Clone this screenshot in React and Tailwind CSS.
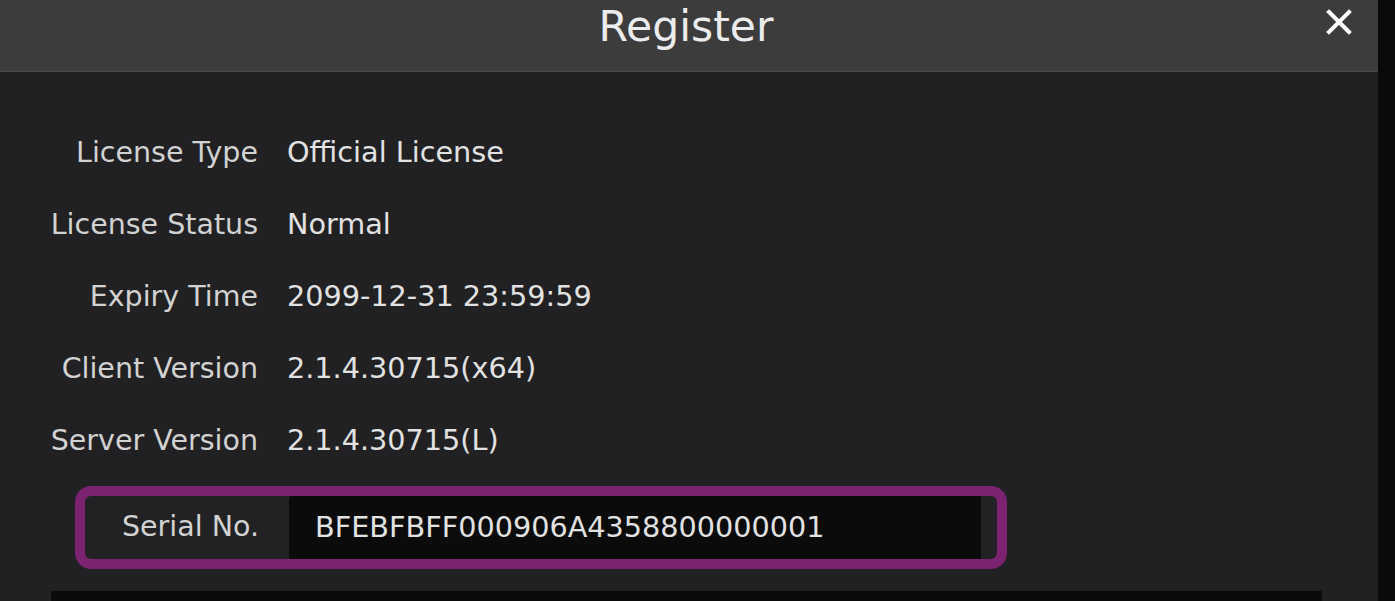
import React from 'react';

const rows = [
    ['License Type', 'Official License'],
    ['License Status', 'Normal'],
    ['Expiry Time', '2099-12-31 23:59:59'],
    ['Client Version', '2.1.4.30715(x64)'],
    ['Server Version', '2.1.4.30715(L)'],
];

export default function App() {
    return (
        <div className="flex w-[1395px] h-[601px] overflow-hidden bg-[#0a0a0a] font-['DejaVu_Sans',sans-serif]">
            <div className="flex w-[1378px] flex-col bg-[#212123]">
                {/* Title bar */}
                <div className="relative flex h-[72px] shrink-0 items-center justify-center border-b border-[#4a4a4a] bg-[#3c3c3c]">
                    <h1 className="-mt-[17px] ml-[-6px] text-[42.5px] leading-none text-[#ececec]">Register</h1>
                    <button className="absolute right-[26px] top-[9px] text-white">
                        <svg width="26" height="26" viewBox="0 0 26 26" fill="none" stroke="currentColor" strokeWidth="4" strokeLinecap="square">
                            <path d="M3 3 L23 23 M23 3 L3 23" />
                        </svg>
                    </button>
                </div>

                {/* Info rows */}
                <div className="flex flex-col pt-[45px]">
                    {rows.map(([label, value]) => (
                        <div key={label} className="flex h-[72px] items-center">
                            <div className="w-[258px] text-right text-[28.5px] text-[#d2d2d2]">{label}</div>
                            <div className="ml-[29px] text-[28.7px] text-[#e2e2e2]">{value}</div>
                        </div>
                    ))}
                </div>

                {/* Serial number, highlighted */}
                <div className="ml-[75px] mt-[9px] flex h-[83px] w-[932px] shrink-0 rounded-[16px] border-[10px] border-[#7b2370] bg-[#222224]">
                    <div className="flex w-[204px] items-center justify-end pr-[30px] text-[28.5px] text-[#d2d2d2]">
                        Serial No.
                    </div>
                    <div className="flex w-[692px] items-center rounded-l-[3px] bg-[#0b0b0b] pl-[26px] text-[28.7px] text-[#e2e2e2]">
                        BFEBFBFF000906A4358800000001
                    </div>
                </div>

                {/* Next panel (cut off) */}
                <div className="ml-[51px] mt-[22px] w-[1271px] flex-1 bg-[#0b0b0b]" />
            </div>
        </div>
    );
}
